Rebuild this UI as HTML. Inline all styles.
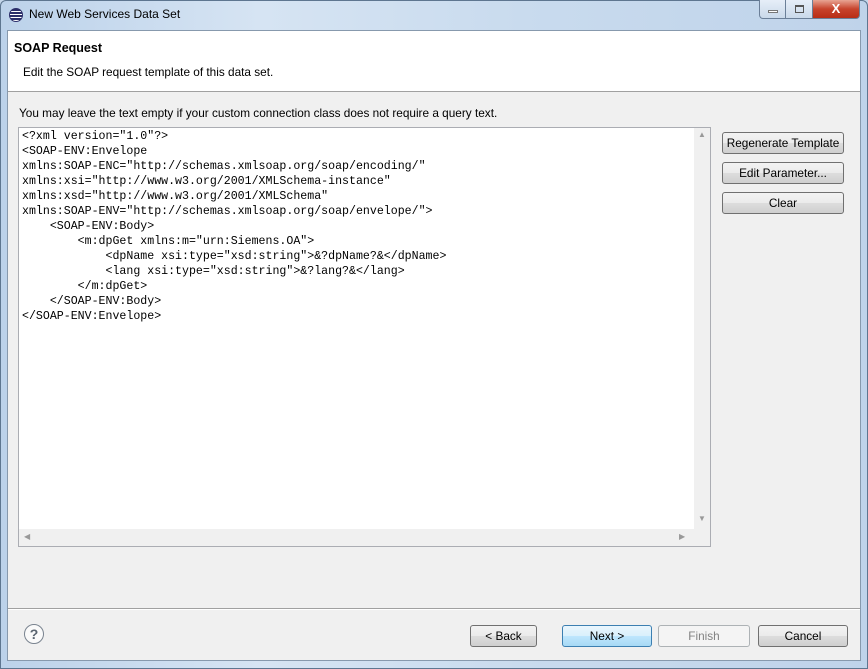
<!DOCTYPE html>
<html><head><style>
*{box-sizing:border-box;margin:0;padding:0}
body{width:868px;height:669px;overflow:hidden;background:#c4d6ea;font-family:"Liberation Sans",sans-serif;font-size:11.8px;position:relative}
.frame{position:absolute;left:0;top:0;width:868px;height:669px;background:linear-gradient(90deg,#bcd2ea,#d6e4f3 30%,#c9dbee 60%,#bfd3ea);border-radius:6px 6px 0 0;border:1px solid #5e7690}
.title{position:absolute;left:29px;top:7px;font-size:12px;color:#000}
.icon{position:absolute;left:9px;top:8px;width:14px;height:14px;border-radius:50%;background:repeating-linear-gradient(180deg,#2c2f6a 0 2px,#fff 2px 3px);border:1px solid #2c2f6a}
.tb{position:absolute;top:0;height:19px;border:1px solid #6b7f98;border-top:none}
.content{position:absolute;left:7px;top:30px;width:854px;height:631px;background:#f0f0f0;border:1px solid #8799ad}
.header{position:absolute;left:0;top:0;width:852px;height:61px;background:#fff;border-bottom:1px solid #a0a0a0}
.h1{position:absolute;left:6px;top:10px;font-weight:bold;font-size:12.5px}
.h2{position:absolute;left:15px;top:34px}
.msg{position:absolute;left:11px;top:75px}
.ta{position:absolute;left:10px;top:96px;width:693px;height:420px;background:#fff;border:1px solid #abadb3}
.code{position:absolute;left:3px;top:1px;font-family:"Liberation Mono",monospace;font-size:11.6px;line-height:15px;white-space:pre;color:#000}
.vs{position:absolute;right:0;top:0;width:16px;height:402px;background:#f0f0f0}
.hs{position:absolute;left:0;bottom:0;width:675px;height:17px;background:#f0f0f0}
.corner{position:absolute;right:0;bottom:0;width:17px;height:17px;background:#f0f0f0}
.arr{position:absolute;color:#999;font-size:8px}
.btn{position:absolute;height:22px;border:1px solid #707070;border-radius:3px;background:linear-gradient(#f2f2f2 0,#ebebeb 50%,#dddddd 51%,#cfcfcf);text-align:center;line-height:20px;font-size:11.8px;color:#000}
.sep{position:absolute;left:0;top:577px;width:852px;border-top:1px solid #a0a0a0;border-bottom:1px solid #fff}
.help{position:absolute;left:16px;top:593px;width:20px;height:20px;border-radius:50%;border:1px solid #7a8490;text-align:center;font-weight:bold;color:#5a6470;line-height:18px;font-size:14px;background:#fafafa}
</style></head><body>
<div class="frame"></div>
<div class="icon"></div>
<div class="title">New Web Services Data Set</div>
<div class="tb" style="left:759px;width:27px;border-radius:0 0 0 4px;background:linear-gradient(#e6eef8,#cad9ea)"><div style="position:absolute;left:8px;top:10px;width:10px;height:3px;border:1px solid #777;background:#fff"></div></div>
<div class="tb" style="left:785px;width:28px;background:linear-gradient(#e6eef8,#cad9ea)"><div style="position:absolute;left:9px;top:5px;width:9px;height:8px;border:1px solid #555;border-top-width:2px"></div></div>
<div class="tb" style="left:812px;width:48px;border-radius:0 0 4px 0;background:linear-gradient(#e8a493,#c7432c 50%,#b82d16);color:#fff;font-weight:bold;text-align:center;line-height:17px;font-size:13px">X</div>
<div class="content">
 <div class="header">
  <div class="h1">SOAP Request</div>
  <div class="h2">Edit the SOAP request template of this data set.</div>
 </div>
 <div class="msg">You may leave the text empty if your custom connection class does not require a query text.</div>
 <div class="ta">
<div class="code">&lt;?xml version="1.0"?&gt;
&lt;SOAP-ENV:Envelope
xmlns:SOAP-ENC="http://schemas.xmlsoap.org/soap/encoding/"
xmlns:xsi="http://www.w3.org/2001/XMLSchema-instance"
xmlns:xsd="http://www.w3.org/2001/XMLSchema"
xmlns:SOAP-ENV="http://schemas.xmlsoap.org/soap/envelope/"&gt;
    &lt;SOAP-ENV:Body&gt;
        &lt;m:dpGet xmlns:m="urn:Siemens.OA"&gt;
            &lt;dpName xsi:type="xsd:string"&gt;&amp;?dpName?&amp;&lt;/dpName&gt;
            &lt;lang xsi:type="xsd:string"&gt;&amp;?lang?&amp;&lt;/lang&gt;
        &lt;/m:dpGet&gt;
    &lt;/SOAP-ENV:Body&gt;
&lt;/SOAP-ENV:Envelope&gt;</div>
  <div class="vs"><span class="arr" style="left:4px;top:2px">▲</span><span class="arr" style="left:4px;top:386px">▼</span></div>
  <div class="hs"><span class="arr" style="left:5px;top:3px">◀</span><span class="arr" style="left:660px;top:3px">▶</span></div>
  <div class="corner"></div>
 </div>
 <div class="btn" style="left:714px;top:101px;width:122px">Regenerate Template</div>
 <div class="btn" style="left:714px;top:131px;width:122px">Edit Parameter...</div>
 <div class="btn" style="left:714px;top:161px;width:122px">Clear</div>
 <div class="sep"></div>
 <div class="help">?</div>
 <div class="btn" style="left:462px;top:594px;width:67px">&lt; Back</div>
 <div class="btn" style="left:554px;top:594px;width:90px;border-color:#3c7fb1;background:linear-gradient(#eaf6fd,#d9f0fc 50%,#bee6fd 51%,#a7d9f5)">Next &gt;</div>
 <div class="btn" style="left:650px;top:594px;width:92px;border-color:#adb2b5;background:#f4f4f4;color:#838383">Finish</div>
 <div class="btn" style="left:750px;top:594px;width:90px">Cancel</div>
</div>
</body></html>
